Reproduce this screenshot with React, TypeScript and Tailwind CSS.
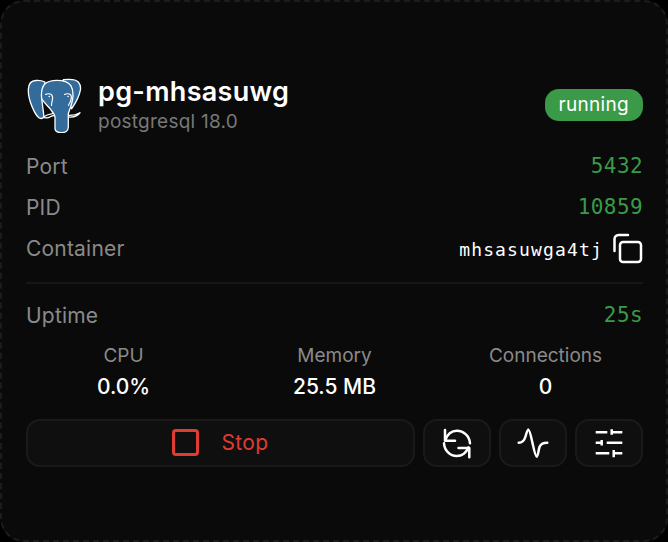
const PgLogo = () => (
  <svg width="56" height="56" viewBox="0 0 56 56" fill="none" className="shrink-0">
    <g stroke="#fff" strokeWidth="1.300" strokeLinejoin="round" strokeLinecap="round">
      <path
        d="M2.300 12.500C2.500 7 5 3.700 10 3.500c3.500-.2 6.500.3 9 1.500l-3.300 16.700L18 40c-1 1.200-3 1.800-4.700 1C9.500 38.500 2 24 2.300 12.500Z"
        fill="#336b9b"
      />
      <path
        d="M37.300 2.700C43 2 50 2.500 52.300 5c2.500 3 2.500 6 2 8.300-1 6-5 13-8.600 18.400L40 20Z"
        fill="#336b9b"
      />
      <path
        d="M19 6.700C22 4.300 26 3.300 30.700 3.300c6 0 11.500 1.500 14 5 2.500 4 2.600 9 2 13.400-.6 5-2.700 10-4.400 15V50c0 3.500-3 5.700-6.600 5.700-3.500 0-6.700-.9-6.700-4.400V40.500c0-3.500-3-6-5-8.800-2.500-3.200-6-6-8.300-10C15 16 16 10 19 6.700Z"
        fill="#336b9b"
      />
      <path d="M26.700 36.700c-2.500.3-6 1.200-9.400 3.300 1.500 1.500 5 1 6.500 0 1.500-1 3-1.300 4.200-1.500" fill="#0a0a0a" />
      <path d="M43 38.300c3.500 0 8-.8 11-2.600-2 3.300-6.500 4.600-11 4.300" fill="#0a0a0a" />
      <path d="M19.500 17.500c1.500-1 4.500-1.200 6 .2 1.500 1.600 1.300 3.800.8 5.800-.5 2-.8 3-.8 5" strokeWidth="1.100" />
      <path d="M38.500 17.500c1.500-1 4.500-1.200 6 .2 1 1.200 1 3.800.3 5.800-.5 2-1.800 3-2.300 5" strokeWidth="1.100" />
    </g>
    <circle cx="23.200" cy="19.500" r="0.800" fill="#fff" />
    <circle cx="42" cy="19.500" r="0.800" fill="#fff" />
  </svg>
);

const IconButton = ({ children }: { children: React.ReactNode }) => (
  <button className="flex h-12 w-[68px] items-center justify-center rounded-[14px] border-2 border-[#1a1a1a] bg-[#0f0f0f]">
    {children}
  </button>
);

const InfoRow = ({ label, value }: { label: string; value: string }) => (
  <div className="flex h-[41px] items-center justify-between">
    <span className="text-[21px] tracking-[0.2px] text-[#8a8a8a]">{label}</span>
    <span className="font-['DejaVu_Sans_Mono',monospace] text-[21px] tracking-[0.4px] text-[#3a9a48]">{value}</span>
  </div>
);

const Stat = ({ label, value }: { label: string; value: string }) => (
  <div className="flex flex-col items-center">
    <span className="text-[19px] leading-[24px] text-[#8a8a8a]">{label}</span>
    <span className="mt-[7px] text-[21px] leading-[24px] font-medium text-white">{value}</span>
  </div>
);

const App = () => {
  return (
    <div className="h-[542px] w-[668px] bg-[#000] font-['Inter',sans-serif]">
      <div className="flex h-full w-full flex-col justify-center rounded-[24px] border-2 border-dashed border-[#1c1c1c] bg-[#0a0a0a] pr-[23px] pl-[24px]">
        <div className="flex items-center justify-between">
          <div className="flex items-center gap-4">
            <PgLogo />
            <div className="flex flex-col">
              <span className="text-[27px] leading-[32px] font-semibold tracking-[0.3px] text-white">pg-mhsasuwg</span>
              <span className="mt-[2px] text-[19px] leading-[24px] tracking-[0.25px] text-[#787878]">postgresql 18.0</span>
            </div>
          </div>
          <span className="rounded-[14px] bg-[#3a9a48] px-[14px] py-[3px] text-[19px] leading-[26px] font-normal tracking-[0.3px] text-white">
            running
          </span>
        </div>
        <div className="mt-[13px]">
          <InfoRow label="Port" value="5432" />
          <InfoRow label="PID" value="10859" />
          <div className="flex h-[41px] items-center justify-between">
            <span className="text-[21px] tracking-[0.2px] text-[#8a8a8a]">Container</span>
            <div className="flex items-center gap-[8px]">
              <span className="font-['DejaVu_Sans_Mono',monospace] text-[18px] tracking-[1.15px] text-white">mhsasuwga4tj</span>
              <svg width="32" height="32" viewBox="0 0 32 32" fill="none" stroke="#fff" strokeWidth="2.500" strokeLinecap="round" strokeLinejoin="round">
                <rect x="9" y="9" width="21" height="20" rx="3" />
                <path d="M3.500 18V6a4 4 0 0 1 4-4H17" />
              </svg>
            </div>
          </div>
        </div>
        <div className="mt-[12px] h-[2px] bg-[#161616]" />
        <div className="mt-[12px]">
          <InfoRow label="Uptime" value="25s" />
        </div>
        <div className="mt-[7px] grid grid-cols-3 gap-4">
          <Stat label="CPU" value="0.0%" />
          <Stat label="Memory" value="25.5 MB" />
          <Stat label="Connections" value="0" />
        </div>
        <div className="mt-[20px] flex gap-2">
          <button className="flex h-12 flex-1 items-center justify-center gap-[22px] rounded-[14px] border-2 border-[#1a1a1a] bg-[#0f0f0f] text-[21px] font-normal tracking-[0.4px] text-[#e03c34]">
            <span className="h-[27px] w-[27px] rounded-[4px] border-[3px] border-[#e03c34]" />
            Stop
          </button>
          <IconButton>
            <svg width="32" height="32" viewBox="0 0 32 32" fill="none" stroke="#fff" strokeWidth="2.500" strokeLinecap="round" strokeLinejoin="round">
              <path d="M4.500 13C6 7.500 10.500 3.700 15.700 3.700 23 3.700 28.500 9.500 29 16.300" />
              <path d="M27.300 20.500C25.500 25.500 21 29 15.700 29 9 29 3.500 23.500 3 16.300" />
              <path d="M4 3v10.700h10" />
              <path d="M28.300 30.300V21H17.500" />
            </svg>
          </IconButton>
          <IconButton>
            <svg width="32" height="32" viewBox="0 0 32 32" fill="none" stroke="#fff" strokeWidth="2.500" strokeLinecap="round" strokeLinejoin="round">
              <path d="M1.700 15.700C6 15.700 7.500 13 8.500 9.500 9.500 6 10.500 2.500 11.300 2.500 12.500 2.500 14 9 15.500 16 17 23 18.500 29.700 19.700 29.700 21 29.700 21.500 23 22.500 20 23.500 17 26 15.700 30.300 15.700" />
            </svg>
          </IconButton>
          <IconButton>
            <svg width="32" height="32" viewBox="0 0 32 32" fill="none" stroke="#fff" strokeWidth="2.500">
              <path d="M2.700 5.300h11.600M18.700 5.300h10.600M18.700 2.300v5.400" />
              <path d="M2.700 15.700h6M8.700 13v5.400M13.700 15.700h15.600" />
              <path d="M2.700 26.300h13.600M20.700 26.300h8.600M20.700 23v7.300" />
            </svg>
          </IconButton>
        </div>
      </div>
    </div>
  );
};

export default App;
